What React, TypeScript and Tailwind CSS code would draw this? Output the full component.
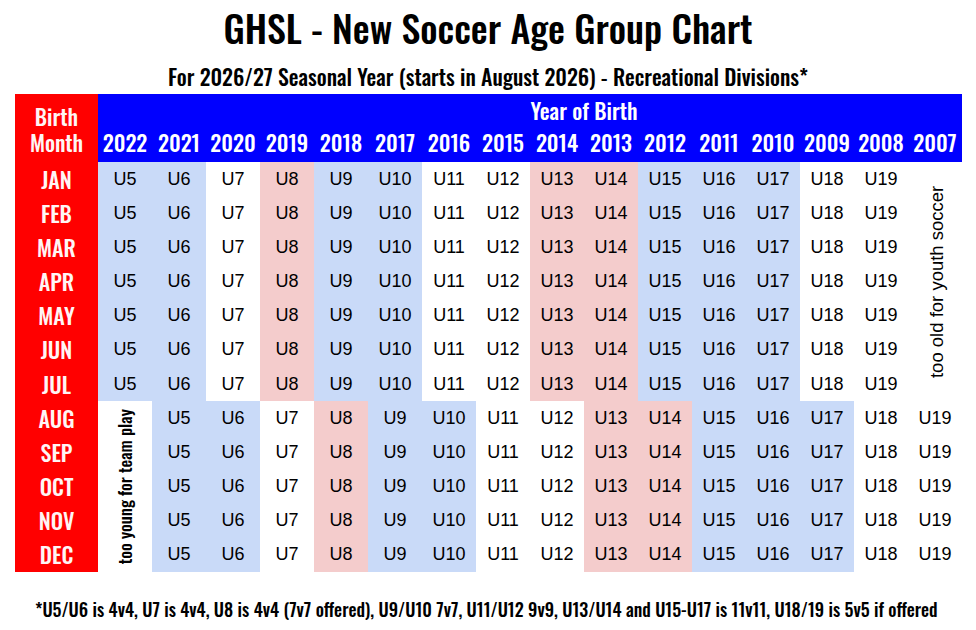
import React from "react";

const COND = "font-['Oswald','Liberation_Sans_Narrow','DejaVu_Sans_Condensed','Liberation_Sans',sans-serif]";
const ARIAL = "font-['Liberation_Sans',Arial,sans-serif]";

const YEARS = [2022, 2021, 2020, 2019, 2018, 2017, 2016, 2015, 2014, 2013, 2012, 2011, 2010, 2009, 2008, 2007];
const MONTHS = ["JAN", "FEB", "MAR", "APR", "MAY", "JUN", "JUL", "AUG", "SEP", "OCT", "NOV", "DEC"];

// age group -> fill colour
function fill(u: number) {
  if (u === 8 || u === 13 || u === 14) return "bg-[#f4cccc]";
  if (u === 5 || u === 6 || u === 9 || u === 10 || u === 15 || u === 16 || u === 17) return "bg-[#c9daf8]";
  return "bg-white";
}

function Cell({ u }: { u: number }) {
  return (
    <div className={`${fill(u)} ${ARIAL} flex items-center justify-center text-[18px] text-black`}>
      U{u}
    </div>
  );
}

function MonthCell({ m }: { m: string }) {
  return (
    <div className={`bg-[#ff0000] ${COND} flex items-center justify-center text-[22px] font-medium text-[#fff5f5]`}>
      {m}
    </div>
  );
}

export default function App() {
  return (
    <div className="relative h-[630px] w-[976px] overflow-hidden bg-white text-black">
      <h1 className={`${COND} text-center text-[38px] font-medium leading-[54px]`}>
        GHSL - New Soccer Age Group Chart
      </h1>
      <p className={`${COND} mt-[4px] text-center text-[21.8px] font-medium leading-[36px]`}>
        For 2026/27 Seasonal Year (starts in August 2026) - Recreational Divisions*
      </p>

      <div className="ml-[15px] grid grid-cols-[83px_repeat(16,54px)] grid-rows-[33px_35px_repeat(12,34.17px)]">
        <div className={`row-span-2 bg-[#ff0000] ${COND} flex flex-col items-center justify-center pt-[2px] text-[22px] font-medium leading-[26px] text-[#fff5f5]`}>
          <span>Birth</span>
          <span>Month</span>
        </div>
        <div className="col-span-2 bg-[#0000ff]" />
        <div className={`col-span-14 bg-[#0000ff] ${COND} flex items-end justify-center pb-[3px] text-[22px] font-medium leading-[28px] text-white`}>
          Year of Birth
        </div>
        {YEARS.map((y) => (
          <div key={y} className={`bg-[#0000ff] ${COND} flex items-center justify-center pb-[4px] text-[22px] font-medium text-white`}>
            {y}
          </div>
        ))}

        {MONTHS.slice(0, 7).map((m, i) => (
          <React.Fragment key={m}>
            <MonthCell m={m} />
            {YEARS.slice(0, 15).map((y, j) => (
              <Cell key={y} u={5 + j} />
            ))}
            {i === 0 && (
              <div className={`row-span-7 flex items-center justify-center pl-[4px] ${ARIAL} text-[18.5px]`}>
                <span className="-rotate-90 whitespace-nowrap">too old for youth soccer</span>
              </div>
            )}
          </React.Fragment>
        ))}

        {MONTHS.slice(7).map((m, i) => (
          <React.Fragment key={m}>
            <MonthCell m={m} />
            {i === 0 && (
              <div className={`row-span-5 flex items-center justify-center ${COND} text-[17px] font-medium`}>
                <span className="-rotate-90 whitespace-nowrap">too young for team play</span>
              </div>
            )}
            {YEARS.slice(1).map((y, j) => (
              <Cell key={y} u={5 + j} />
            ))}
          </React.Fragment>
        ))}
      </div>

      <p className={`${COND} mt-[24px] pl-[35px] text-[18px] font-medium`}>
        *U5/U6 is 4v4, U7 is 4v4, U8 is 4v4 (7v7 offered), U9/U10 7v7, U11/U12 9v9, U13/U14 and U15-U17 is 11v11, U18/19 is 5v5 if offered
      </p>
    </div>
  );
}
